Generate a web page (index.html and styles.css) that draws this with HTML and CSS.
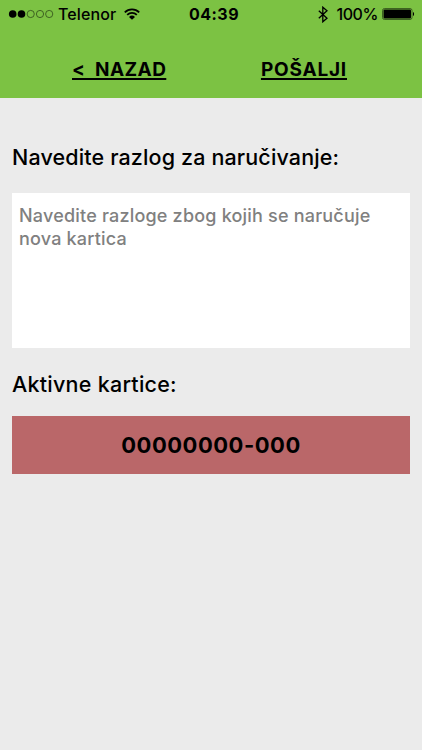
FILE: index.html
```html
<!DOCTYPE html>
<html lang="sr-Latn">
<head>
    <meta charset="UTF-8">
    <meta name="viewport" content="width=device-width, initial-scale=1.0">
    <title>Naručivanje kartice</title>
    <link rel="stylesheet" href="styles.css">
</head>
<body>
    <header class="header">
        <div class="status">
            <div class="status-left">
                <svg class="signal" width="46" height="10" viewBox="0 0 46 10">
                    <circle cx="4.7" cy="5" r="3.8"/>
                    <circle cx="13.5" cy="5" r="3.8"/>
                    <circle class="empty" cx="22.7" cy="5" r="3.6"/>
                    <circle class="empty" cx="32" cy="5" r="3.6"/>
                    <circle class="empty" cx="41.2" cy="5" r="3.6"/>
                </svg>
                <span class="carrier">Telenor</span>
                <svg class="wifi" width="16" height="12" viewBox="0 0 16 12">
                    <path class="arc" d="M.8 4.3a10.3 10.3 0 0 1 14.4 0M3.2 6.9a6.9 6.9 0 0 1 9.6 0"/>
                    <path d="M5 9a4.4 4.4 0 0 1 6 0L8 11.8z"/>
                </svg>
            </div>
            <span class="time">04:39</span>
            <div class="status-right">
                <svg class="bluetooth" width="10" height="17" viewBox="0 0 10 17">
                    <path d="M.8 4.7l8.2 7.5-4.2 3.6V1.2L9 4.8.8 12.3"/>
                </svg>
                <span class="percent">100%</span>
                <svg class="battery" width="34" height="12" viewBox="0 0 34 12">
                    <rect class="frame" x=".5" y=".5" width="29.5" height="11" rx="2"/>
                    <rect x="1.5" y="1.5" width="27.5" height="9" rx="1"/>
                    <path d="M31 4c1.4.4 1.4 3.6 0 4z"/>
                </svg>
            </div>
        </div>
        <nav class="nav">
            <a class="back" href="#">&lt;&nbsp; NAZAD</a>
            <a class="send" href="#">POŠALJI</a>
        </nav>
    </header>

    <main class="content">
        <h2 class="reason-title">Navedite razlog za naručivanje:</h2>
        <textarea class="reason" placeholder="Navedite razloge zbog kojih se naručuje nova kartica"></textarea>
        <h2 class="cards-title">Aktivne kartice:</h2>
        <button class="card">00000000-000</button>
    </main>
</body>
</html>
```

FILE: styles.css
```css
* {
    margin: 0;
    padding: 0;
    box-sizing: border-box;
}

body {
    min-height: 100vh;
    font-family: Inter, "Liberation Sans", sans-serif;
    background: #ebebeb;
    color: #000;
}

.header {
    height: 98px;
    background: #7cc243;
}

.status {
    display: grid;
    grid-template-columns: 1fr auto 1fr;
    align-items: center;
    height: 28px;
    padding: 0 6px 0 8px;
    font-size: 16px;
    line-height: 20px;
}

.status-left,
.status-right {
    display: flex;
    align-items: center;
}

.status-left {
    padding-right: 4px;
}

.status-right {
    justify-content: flex-end;
}

.signal .empty {
    fill: none;
    stroke: #2f4a19;
    stroke-width: 0.8;
}

.carrier {
    margin-left: 4px;
    font-weight: 500;
    letter-spacing: 0.1px;
}

.wifi {
    margin-left: 8px;
}

.wifi .arc {
    fill: none;
    stroke: #000;
    stroke-width: 1.8;
}

.time {
    padding-left: 4px;
    font-weight: 700;
    letter-spacing: 0.5px;
}

.bluetooth path {
    fill: none;
    stroke: #000;
    stroke-width: 1.3;
}

.percent {
    margin-left: 8px;
    font-weight: 500;
    letter-spacing: -0.4px;
}

.battery {
    margin-left: 4px;
}

.battery .frame {
    fill: none;
    stroke: #2f4a19;
    stroke-width: 0.8;
}

.nav {
    display: flex;
    justify-content: space-between;
    padding: 30px 75px 0 72px;
}

.nav a {
    color: #000;
    font-size: 19px;
    font-weight: 700;
    line-height: 24px;
    text-decoration: underline;
    text-decoration-thickness: 1.5px;
    text-underline-offset: 2px;
}

.back {
    letter-spacing: 0.4px;
}

.send {
    letter-spacing: 0.8px;
}

.content {
    display: flex;
    flex-direction: column;
    padding: 44px 12px 0;
}

.content h2 {
    font-size: 21.5px;
    font-weight: 500;
    line-height: 30px;
}

.reason-title {
    letter-spacing: 0.14px;
}

.cards-title {
    letter-spacing: 0.25px;
}

.reason {
    height: 155px;
    margin: 21px 0;
    padding: 12px 7px;
    border: none;
    outline: none;
    resize: none;
    background: #fff;
    font-family: inherit;
    font-size: 18px;
    font-weight: 500;
    letter-spacing: 0.2px;
    line-height: 22.5px;
}

.reason::placeholder {
    color: #808080;
}

.card {
    height: 58px;
    margin-top: 17px;
    border: none;
    background: #ba6769;
    color: #000;
    font-family: inherit;
    font-size: 22px;
    font-weight: 700;
    letter-spacing: 0.5px;
}
```
